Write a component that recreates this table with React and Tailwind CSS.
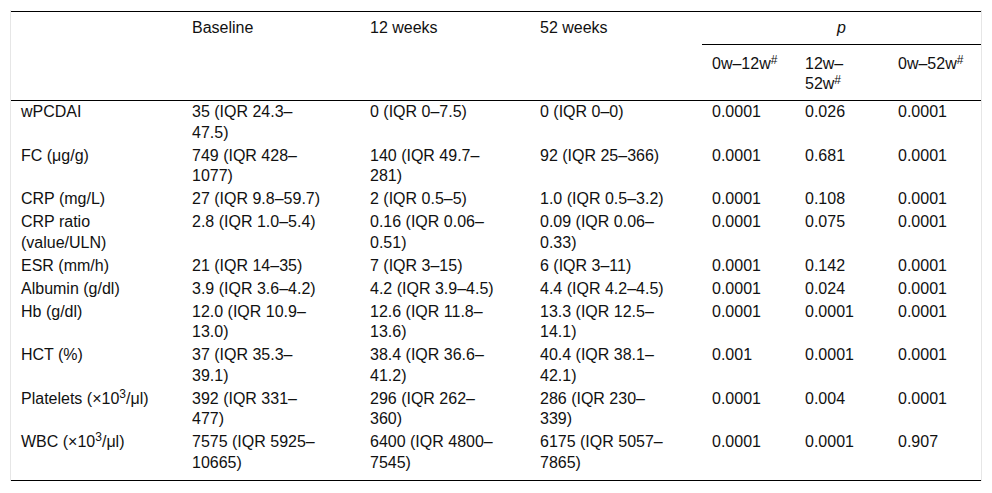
import React from "react";

const rows = [
  ["wPCDAI", "35 (IQR 24.3–47.5)", "0 (IQR 0–7.5)", "0 (IQR 0–0)", "0.0001", "0.026", "0.0001"],
  ["FC (μg/g)", "749 (IQR 428–1077)", "140 (IQR 49.7–281)", "92 (IQR 25–366)", "0.0001", "0.681", "0.0001"],
  ["CRP (mg/L)", "27 (IQR 9.8–59.7)", "2 (IQR 0.5–5)", "1.0 (IQR 0.5–3.2)", "0.0001", "0.108", "0.0001"],
  ["CRP ratio (value/ULN)", "2.8 (IQR 1.0–5.4)", "0.16 (IQR 0.06–0.51)", "0.09 (IQR 0.06–0.33)", "0.0001", "0.075", "0.0001"],
  ["ESR (mm/h)", "21 (IQR 14–35)", "7 (IQR 3–15)", "6 (IQR 3–11)", "0.0001", "0.142", "0.0001"],
  ["Albumin (g/dl)", "3.9 (IQR 3.6–4.2)", "4.2 (IQR 3.9–4.5)", "4.4 (IQR 4.2–4.5)", "0.0001", "0.024", "0.0001"],
  ["Hb (g/dl)", "12.0 (IQR 10.9–13.0)", "12.6 (IQR 11.8–13.6)", "13.3 (IQR 12.5–14.1)", "0.0001", "0.0001", "0.0001"],
  ["HCT (%)", "37 (IQR 35.3–39.1)", "38.4 (IQR 36.6–41.2)", "40.4 (IQR 38.1–42.1)", "0.001", "0.0001", "0.0001"],
  [<>Platelets (×10<sup>3</sup>/μl)</>, "392 (IQR 331–477)", "296 (IQR 262–360)", "286 (IQR 230–339)", "0.0001", "0.004", "0.0001"],
  [<>WBC (×10<sup>3</sup>/μl)</>, "7575 (IQR 5925–10665)", "6400 (IQR 4800–7545)", "6175 (IQR 5057–7865)", "0.0001", "0.0001", "0.907"],
];

const padR = ["pr-[29px]", "pr-[36px]", "pr-[28px]", "pr-[30px]", "pr-[15px]", "pr-[15px]", "pr-[15px]"];

export default function App() {
  return (
    <div
      className="bg-white w-[992px] h-[493px] text-[#111] text-[16px] leading-[20.5px]"
      style={{ fontFamily: '"Liberation Sans", Arial, sans-serif' }}
    >
      <div className="ml-[10px] mt-[10px] w-[972px] border-x border-[#e6e6e6] pt-px">
        <table className="table-fixed w-[970px] border-collapse">
          <colgroup>
            <col className="w-[171px]" />
            <col className="w-[178px]" />
            <col className="w-[170px]" />
            <col className="w-[172px]" />
            <col className="w-[93px]" />
            <col className="w-[93px]" />
            <col className="w-[93px]" />
          </colgroup>
          <thead>
            <tr className="border-t border-black">
              <th rowSpan={2} className="align-top font-normal text-left pl-[10px] pt-[5.5px]"></th>
              <th rowSpan={2} className="align-top font-normal text-left pl-[10px] pr-[36px] pt-[5.5px]">Baseline</th>
              <th rowSpan={2} className="align-top font-normal text-left pl-[10px] pr-[28px] pt-[5.5px]">12 weeks</th>
              <th rowSpan={2} className="align-top font-normal text-left pl-[10px] pr-[30px] pt-[5.5px]">52 weeks</th>
              <th colSpan={3} className="align-top font-normal text-center italic pt-[5.5px] pb-[5.5px] border-b border-black">p</th>
            </tr>
            <tr className="border-b border-black">
              <th className="align-top font-normal text-left pl-[10px] pr-[15px] pt-[9px] pb-[5px]">0w–12w<sup className="top-[-0.4em]">#</sup></th>
              <th className="align-top font-normal text-left pl-[10px] pr-[15px] pt-[9px] pb-[5px]">12w–52w<sup className="top-[-0.4em]">#</sup></th>
              <th className="align-top font-normal text-left pl-[10px] pr-[15px] pt-[9px] pb-[5px]">0w–52w<sup className="top-[-0.4em]">#</sup></th>
            </tr>
          </thead>
          <tbody className="border-b border-black">
            {rows.map((r, i) => (
              <tr key={i}>
                {r.map((c, j) => (
                  <td
                    key={j}
                    className={`align-top pl-[10px] pt-[1.5px] ${i === rows.length - 1 ? "pb-[7px]" : "pb-[1px]"} ${padR[j]}`}
                  >
                    {c}
                  </td>
                ))}
              </tr>
            ))}
          </tbody>
        </table>
      </div>
    </div>
  );
}
